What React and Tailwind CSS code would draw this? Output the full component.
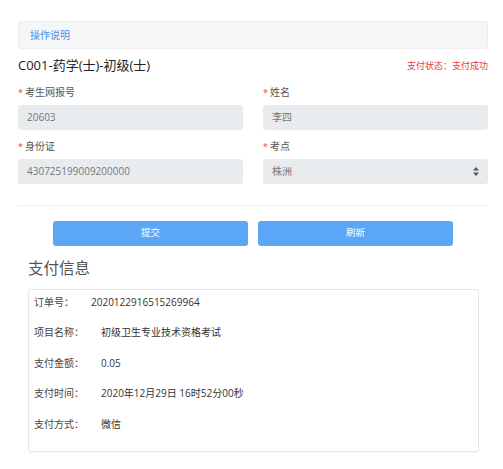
import React from "react";

const fields = [
  { label: "考生网报号", value: "20603" },
  { label: "姓名", value: "李四" },
  { label: "身份证", value: "430725199009200000" },
  { label: "考点", value: "株洲", select: true },
];

const payInfo = [
  { label: "订单号：", value: "2020122916515269964", w: "w-[57px]" },
  { label: "项目名称：", value: "初级卫生专业技术资格考试", w: "w-[67px]" },
  { label: "支付金额：", value: "0.05", w: "w-[67px]" },
  { label: "支付时间：", value: "2020年12月29日 16时52分00秒", w: "w-[67px]" },
  { label: "支付方式：", value: "微信", w: "w-[67px]" },
];

const App = () => {
  return (
    <div
      className="w-[503px] h-[469px] bg-white pl-[18px] pr-[15px] pt-[21px]"
      style={{ fontFamily: '"Open Sans", "Noto Sans CJK SC", sans-serif' }}
    >
      {/* operation tips */}
      <div className="h-[28px] flex items-center px-[11px] bg-[#f5f6f7] border border-[#eeeeee] rounded-[3px] text-[10px] text-[#4a8fe7]">
        操作说明
      </div>

      <div className="flex items-center justify-between h-[34px]">
        <span className="text-[13px] text-[#222]">C001-药学(士)-初级(士)</span>
        <span className="text-[9px] text-[#e83b3b]">支付状态：支付成功</span>
      </div>

      <div className="grid grid-cols-2 gap-x-[20px]">
        {fields.map((f) => (
          <div key={f.label}>
            <div className="h-[19px] flex items-center text-[10px] text-[#555]">
              <span className="text-[#e83b3b] mr-[2px] text-[9px]">*</span>
              {f.label}
            </div>
            <div className="h-[25px] mt-[3px] mb-[7px] flex items-center justify-between px-[9px] bg-[#e9ecef] rounded-[3px] text-[10px] text-[#777]">
              <span>{f.value}</span>
              {f.select && (
                <svg width="6" height="9" viewBox="0 0 6 9">
                  <path d="M3 0 L6 3.5 L0 3.5 Z" fill="#555" />
                  <path d="M3 9 L6 5.5 L0 5.5 Z" fill="#555" />
                </svg>
              )}
            </div>
          </div>
        ))}
      </div>

      <div className="border-t border-[#eeeeee] mt-[14px]" />

      <div className="flex justify-center gap-[10px] mt-[15px]">
        <button className="w-[195px] h-[25px] rounded-[3px] bg-[#5ba6f7] text-white text-[9.5px]">
          提交
        </button>
        <button className="w-[195px] h-[25px] rounded-[3px] bg-[#5ba6f7] text-white text-[9.5px]">
          刷新
        </button>
      </div>

      <div className="px-[10px] pr-[9px]">
        <div className="text-[15.5px] text-[#555] h-[22px] flex items-center mt-[12px]">支付信息</div>
        <div className="mt-[9px] h-[163px] border border-[#e6e6e6] rounded-[3px] shadow-[0_1px_1px_rgba(0,0,0,0.03)] px-[5px] flex flex-col gap-[6.5px]">
          {payInfo.map((r) => (
            <div key={r.label} className="h-[24px] flex items-center text-[10px] text-[#333]">
              <span className={`${r.w} text-[#444]`}>{r.label}</span>
              <span>{r.value}</span>
            </div>
          ))}
        </div>
      </div>
    </div>
  );
};

export default App;
